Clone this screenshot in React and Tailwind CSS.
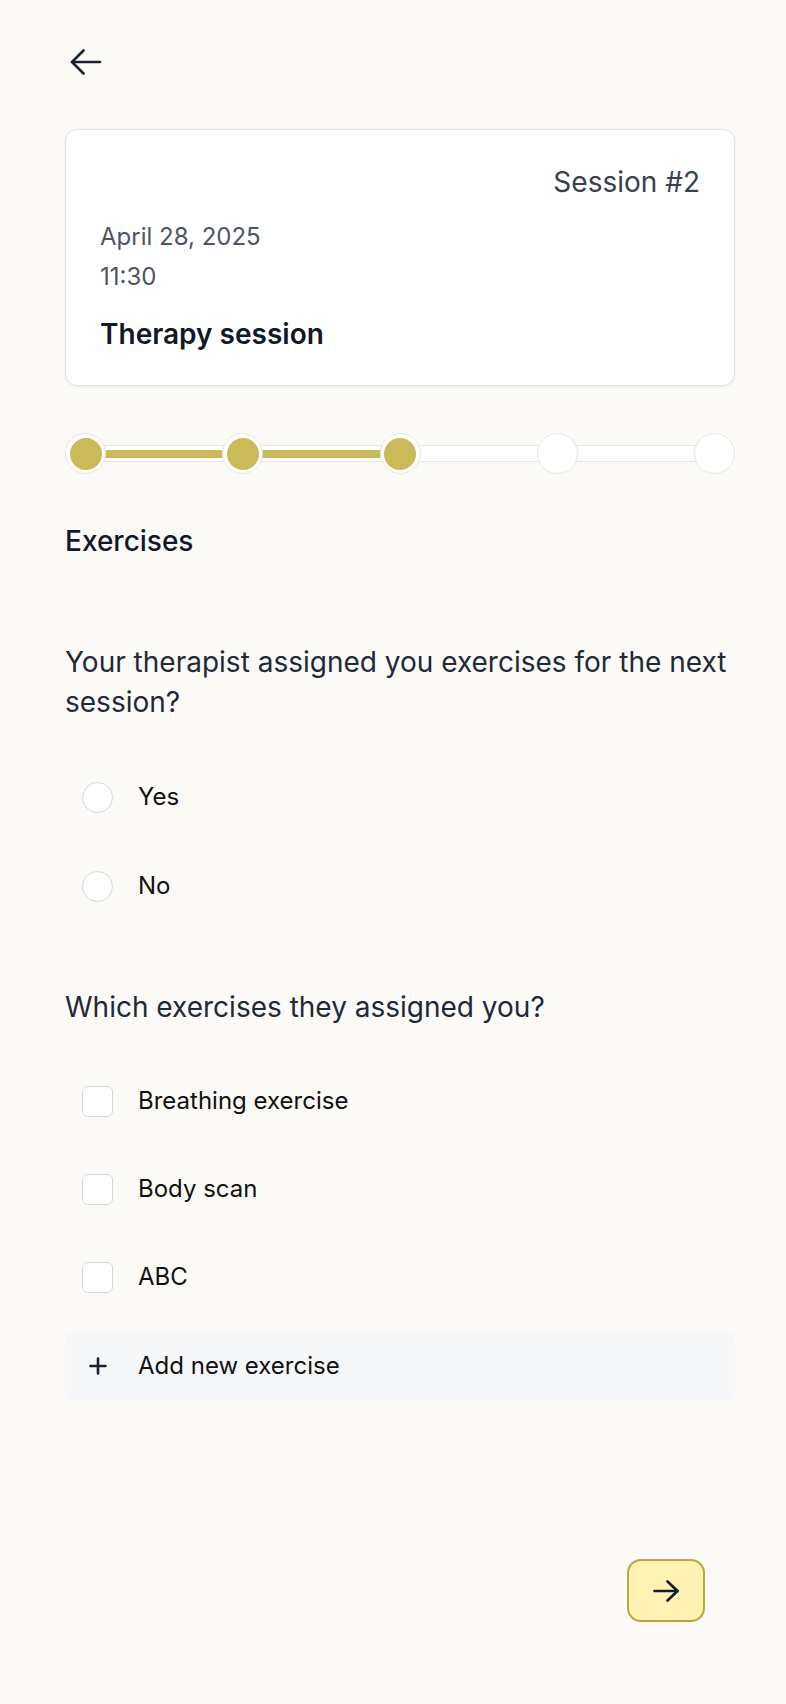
import { useState } from 'react';

const font = { fontFamily: 'Inter, "Noto Sans", sans-serif' };

function Steps({ total, done }) {
  const items = [];
  for (let i = 0; i < total; i++) {
    items.push(
      <div key={'c' + i} className="relative z-10 flex h-[41px] w-[41px] shrink-0 items-center justify-center rounded-full border border-[#e7e6e1] bg-white">
        {i < done && <div className="h-[32px] w-[32px] rounded-full bg-[#cbba58]" />}
      </div>
    );
    if (i < total - 1) {
      items.push(
        <div key={'l' + i} className="-mx-[3px] flex h-[17px] flex-1 items-center border-y border-[#e7e6e1] bg-white px-[2px]">
          {i < done - 1 && <div className="h-[8px] w-full bg-[#cbba58]" />}
        </div>
      );
    }
  }
  return <div className="flex items-center">{items}</div>;
}

function Radio({ label, checked, onClick }) {
  return (
    <button onClick={onClick} className="flex h-[40px] items-center pl-[17px] text-left">
      <span className="flex h-[31px] w-[31px] items-center justify-center rounded-full border border-[#d5d8de] bg-white">
        {checked && <span className="h-[15px] w-[15px] rounded-full bg-[#cbba58]" />}
      </span>
      <span className="ml-[25px] text-[24px] leading-[32px] text-[#111111]">{label}</span>
    </button>
  );
}

function Check({ label, checked, onClick }) {
  return (
    <button onClick={onClick} className="flex h-[40px] items-center pl-[17px] text-left">
      <span className="flex h-[31px] w-[31px] items-center justify-center rounded-[6px] border border-[#d5d8de] bg-white">
        {checked && <span className="h-[15px] w-[15px] rounded-[3px] bg-[#cbba58]" />}
      </span>
      <span className="ml-[25px] text-[24px] leading-[32px] text-[#111111]">{label}</span>
    </button>
  );
}

export default function App() {
  const [answer, setAnswer] = useState(null);
  const [picked, setPicked] = useState({});
  const exercises = ['Breathing exercise', 'Body scan', 'ABC'];

  return (
    <div className="min-h-[1704px] bg-[#fbfaf7] pl-[65px] pt-[49px] pb-[82px]" style={font}>
      <button className="ml-[5px] block">
        <svg width="32" height="26" viewBox="0 0 32 26" fill="none" stroke="#1a2131" strokeWidth="2.6" strokeLinecap="round" strokeLinejoin="round">
          <path d="M30 13H2" />
          <path d="M13.5 1.5 2 13l11.5 11.5" />
        </svg>
      </button>

      <div className="mt-[54px] w-[670px] rounded-[12px] border border-[#e4e3de] bg-white px-[34px] pt-[36px] pb-[35px] shadow-[0_1px_3px_rgba(0,0,0,0.06)]">
        <p className="text-right text-[28px] leading-[32px] text-[#374151]">Session #2</p>
        <p className="mt-[23px] text-[24px] leading-[32px] text-[#4b5563]">April 28, 2025</p>
        <p className="mt-[8px] text-[24px] leading-[32px] text-[#4b5563]">11:30</p>
        <p className="mt-[25px] text-[28px] font-semibold leading-[32px] text-[#111827]">Therapy session</p>
      </div>

      <div className="mt-[47px] w-[670px]">
        <Steps total={5} done={3} />
      </div>

      <h2 className="mt-[51px] text-[28px] font-medium leading-[32px] text-[#111827]">Exercises</h2>

      <p className="mt-[85px] pr-[8px] text-[28px] leading-[40px] text-[#1f2937]">
        Your therapist assigned you exercises for the next session?
      </p>

      <div className="mt-[55px] flex flex-col gap-[49px]">
        <Radio label="Yes" checked={answer === 'yes'} onClick={() => setAnswer('yes')} />
        <Radio label="No" checked={answer === 'no'} onClick={() => setAnswer('no')} />
      </div>

      <p className="mt-[81px] text-[28px] leading-[40px] text-[#1f2937]">Which exercises they assigned you?</p>

      <div className="mt-[54px] flex flex-col gap-[48px]">
        {exercises.map((e) => (
          <Check key={e} label={e} checked={!!picked[e]} onClick={() => setPicked({ ...picked, [e]: !picked[e] })} />
        ))}
      </div>

      <button className="mt-[34px] flex h-[70px] w-[670px] items-center rounded-[10px] bg-[#f6f7f9] pl-[24px] text-left">
        <svg width="18" height="18" viewBox="0 0 18 18" fill="none" stroke="#1a2131" strokeWidth="2.6" strokeLinecap="round">
          <path d="M9 1.5v15M1.5 9h15" />
        </svg>
        <span className="ml-[31px] text-[24px] leading-[32px] text-[#111111]">Add new exercise</span>
      </button>

      <div className="mt-[158px] flex w-[670px] justify-end pr-[30px]">
        <button className="flex h-[63px] w-[78px] items-center justify-center rounded-[14px] border-2 border-[#bba83c] bg-[#fef3b2]">
          <svg width="26" height="22" viewBox="0 0 26 22" fill="none" stroke="#141a26" strokeWidth="2.6" strokeLinecap="round" strokeLinejoin="round">
            <path d="M1.5 11h23" />
            <path d="M14.5 1.5 24.5 11l-10 9.5" />
          </svg>
        </button>
      </div>
    </div>
  );
}
